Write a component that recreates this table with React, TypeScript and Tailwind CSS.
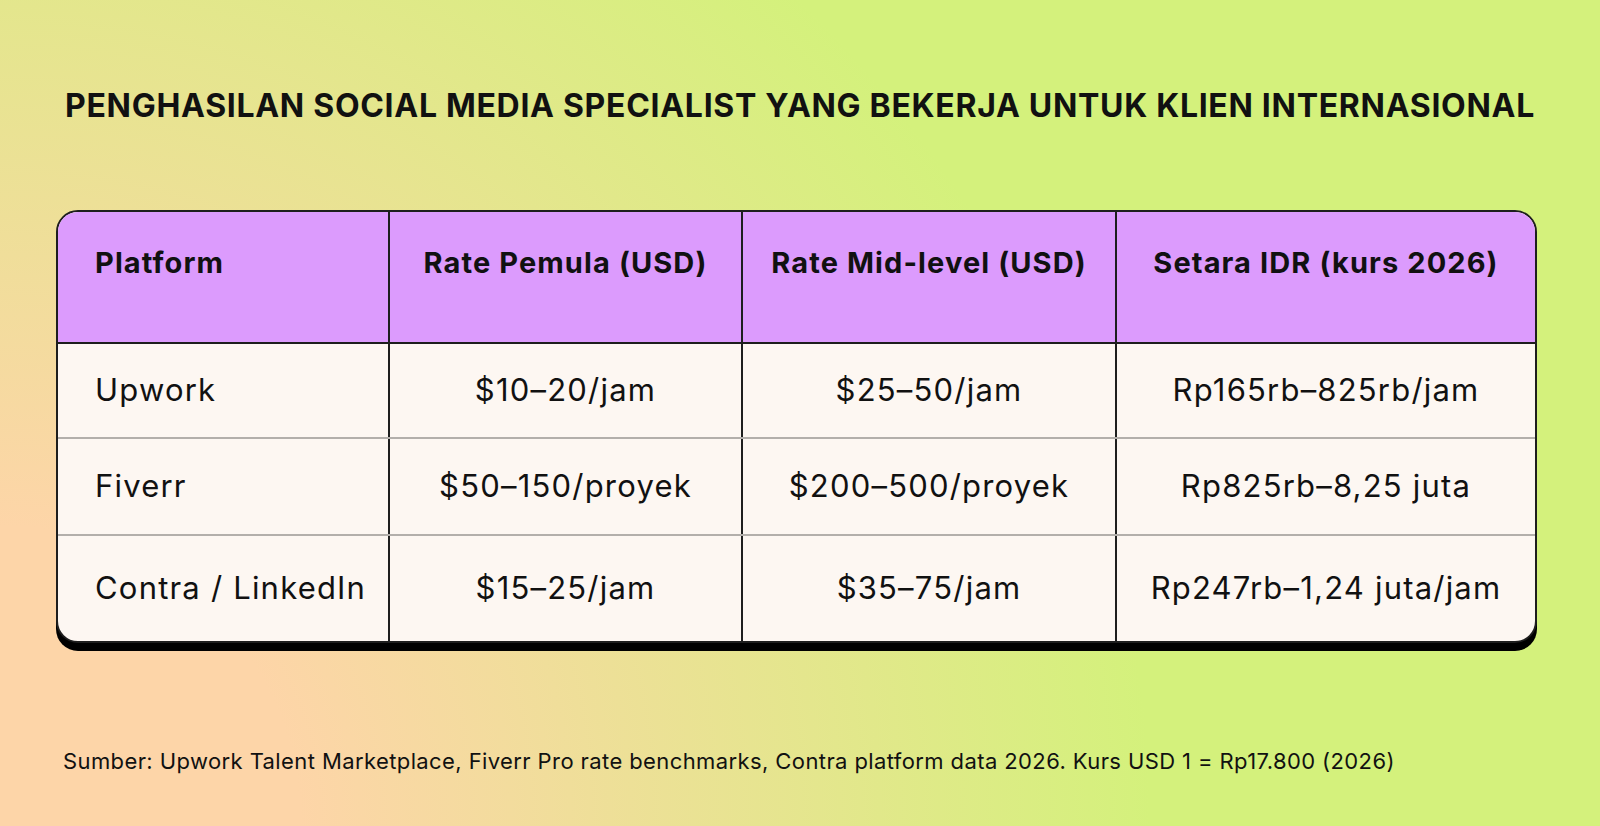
const header = ["Platform", "Rate Pemula (USD)", "Rate Mid-level (USD)", "Setara IDR (kurs 2026)"];

const rows = [
  { h: "h-[95px]", cells: ["Upwork", "$10–20/jam", "$25–50/jam", "Rp165rb–825rb/jam"] },
  { h: "h-[97px]", cells: ["Fiverr", "$50–150/proyek", "$200–500/proyek", "Rp825rb–8,25 juta"] },
  { h: "h-[105px]", cells: ["Contra / LinkedIn", "$15–25/jam", "$35–75/jam", "Rp247rb–1,24 juta/jam"] },
];

const App = () => {
  return (
    <div className="w-[1600px] h-[826px] overflow-hidden bg-[radial-gradient(circle_at_0%_100%,#fdd5a8_300px,#d4f17c_1150px)] font-['Inter',sans-serif] text-[#111111]">
      {/* title */}
      <h1 className="pt-[87px] text-center text-[32px] leading-[38px] font-bold tracking-[0.7px] uppercase">
        Penghasilan Social Media Specialist yang Bekerja untuk Klien Internasional
      </h1>

      {/* table */}
      <div className="mt-[85px] ml-[56px] w-[1481px] border-2 border-[#1e1e1e] rounded-[22px] overflow-hidden shadow-[0_8px_0_#000] bg-[#fdf7f2]">
        <div className="grid grid-cols-[330px_353px_374px_1fr] h-[132px] bg-[#dc9bfd] border-b-2 border-[#1e1e1e]">
          {header.map((t, i) => (
            <div
              key={t}
              className={
                i === 0
                  ? "pl-[37px] pt-[33px] text-[29px] leading-[35px] font-bold tracking-[1.1px]"
                  : "border-l-2 border-[#1e1e1e] pt-[33px] text-center text-[29px] leading-[35px] font-bold tracking-[1.1px]"
              }
            >
              {t}
            </div>
          ))}
        </div>

        {rows.map((r, ri) => (
          <div
            key={ri}
            className={`grid grid-cols-[330px_353px_374px_1fr] ${r.h} ${ri < 2 ? "border-b-2 border-[#b3afab]" : ""}`}
          >
            {r.cells.map((c, i) => (
              <div
                key={i}
                className={
                  i === 0
                    ? "flex items-center pl-[37px] text-[31px] tracking-[1.2px]"
                    : "flex items-center justify-center border-l-2 border-[#1e1e1e] text-[31px] tracking-[1.2px]"
                }
              >
                {c}
              </div>
            ))}
          </div>
        ))}
      </div>

      {/* source */}
      <p className="mt-[104px] ml-[63px] text-[22px] leading-[28px] tracking-[0.4px]">
        Sumber: Upwork Talent Marketplace, Fiverr Pro rate benchmarks, Contra platform data 2026. Kurs USD 1 = Rp17.800 (2026)
      </p>
    </div>
  );
};

export default App;
